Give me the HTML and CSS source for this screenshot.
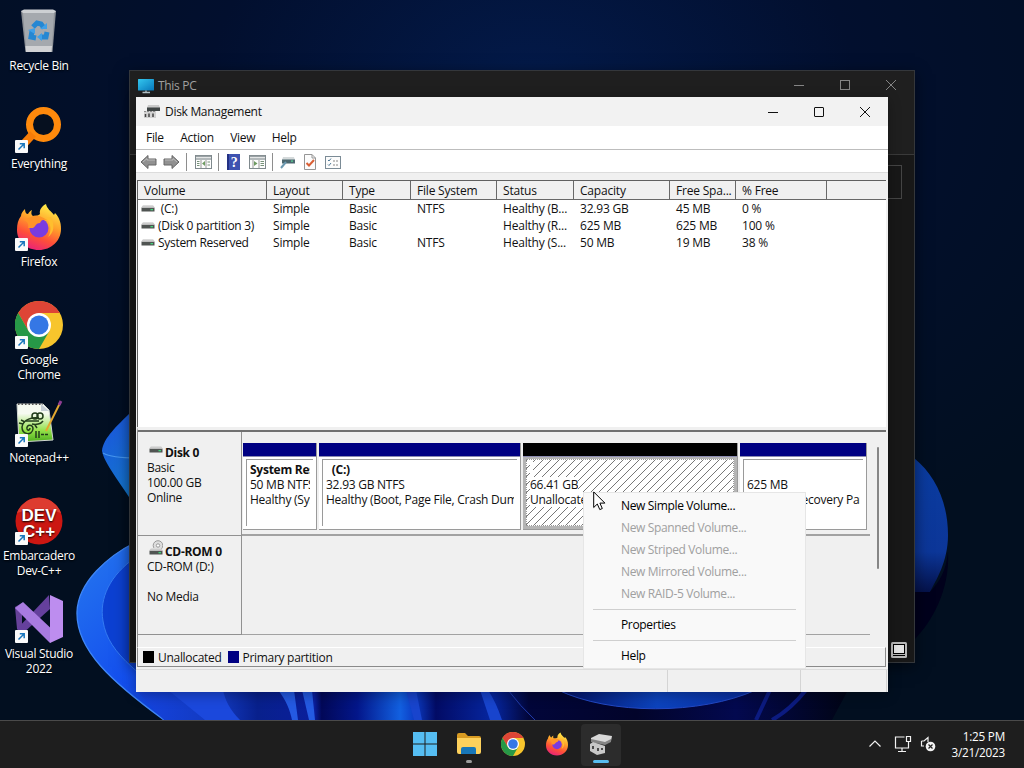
FILE: index.html
```
<!DOCTYPE html>
<html lang="en">
<head>
  <meta charset="UTF-8">
  <title>Disk Management</title>
  <link rel="stylesheet" href="styles.css">
</head>
<body>
  <!-- shared icons -->
  <svg class="defs" width="0" height="0">
    <defs>
      <linearGradient id="ffBody" x1="0.7" y1="0" x2="0.3" y2="1">
        <stop offset="0" stop-color="#fff04a"/><stop offset="0.4" stop-color="#ffa02a"/>
        <stop offset="0.7" stop-color="#ff5038"/><stop offset="1" stop-color="#e8207c"/>
      </linearGradient>
      <linearGradient id="driveTop" x1="0" y1="0" x2="0" y2="1">
        <stop offset="0" stop-color="#e4e4e4"/><stop offset="1" stop-color="#b5b5b5"/>
      </linearGradient>
      <linearGradient id="sky" x1="0" y1="0" x2="1" y2="1">
        <stop offset="0" stop-color="#33c6ee"/><stop offset="1" stop-color="#0879bd"/>
      </linearGradient>
      <symbol id="shortcut" viewBox="0 0 13 13">
        <rect width="13" height="13" rx="1" fill="#fafafa"/>
        <path d="M3.5 9.5 L8.7 4.3 M4.8 3.8 H9.2 V8.2" fill="none" stroke="#1976bd" stroke-width="1.5"/>
      </symbol>
      <symbol id="firefox" viewBox="0 0 48 48">
        <path d="M6 13 C6 10 8 8 10 6 C10 9 11 11 13 11 C14 9 15 8 17 7 C16 9 16 12 18 13 C22 13 24 12 25 11 C24 7 27 3 31 1 C32 6 36 8 39 12 L40 10 C44 14 46 19 46 26 C46 38 36 47 24 47 C11 47 2 38 2 27 C2 21 3 17 6 13 Z" fill="url(#ffBody)"/>
        <circle cx="24" cy="25" r="9.5" fill="#7a3be0"/>
        <path d="M18 13 C25 12 28 15 32 17 C28 16 26 17 25 20 C21 20 21 23 18 25 L13 25 C14 22 13 19 9 17 C12 15 15 15 18 13 Z" fill="#ff9428"/>
        <path d="M31 15 C36 20 37 28 33 34 C39 30 40 22 36 14 Z" fill="#ffbe2e"/>
      </symbol>
      <symbol id="chrome" viewBox="0 0 48 48">
        <circle cx="24" cy="24" r="24" fill="#f7c52c"/>
        <path d="M24 24 L24 12 H44.8 A24 24 0 0 0 3.2 12 L13.6 30 Z" fill="#de4536"/>
        <path d="M3.2 12 L13.6 30 L24 36 L34.4 30 L24 48 A24 24 0 0 1 3.2 12 Z" fill="#279847"/>
        <circle cx="24" cy="24" r="12" fill="#fff"/>
        <circle cx="24" cy="24" r="9.6" fill="#3577e5"/>
      </symbol>
      <symbol id="drive" viewBox="0 0 14 8">
        <path d="M2 0 H12 L14 3 H0 Z" fill="url(#driveTop)"/>
        <rect x="0.5" y="3" width="13" height="3.5" fill="#505452"/>
        <rect x="9.5" y="4" width="2.5" height="1.3" fill="#43d37b"/>
      </symbol>
    </defs>
  </svg>

  <div class="desktop">
    <svg class="wallpaper" width="1024" height="720" viewBox="0 0 1024 720">
      <defs>
        <radialGradient id="night" cx="0.52" cy="0.12" r="0.7">
          <stop offset="0" stop-color="#031a4a"/><stop offset="0.45" stop-color="#020f2e"/><stop offset="1" stop-color="#020f20"/>
        </radialGradient>
        <linearGradient id="petal" x1="0" y1="0" x2="1" y2="1">
          <stop offset="0" stop-color="#2678ee"/><stop offset="0.5" stop-color="#1450ee"/><stop offset="1" stop-color="#0a2ab4"/>
        </linearGradient>
        <linearGradient id="petalTop" x1="0" y1="0" x2="0.3" y2="1">
          <stop offset="0" stop-color="#1c54de"/><stop offset="1" stop-color="#1477cf"/>
        </linearGradient>
        <linearGradient id="petalRight" x1="0" y1="0" x2="0" y2="1">
          <stop offset="0" stop-color="#0a3ca0"/><stop offset="0.7" stop-color="#0c3698"/><stop offset="1" stop-color="#05124a"/>
        </linearGradient>
        <linearGradient id="folds" gradientUnits="userSpaceOnUse" x1="136" y1="0" x2="850" y2="0">
          <stop offset="0" stop-color="#1544e0"/><stop offset="0.12" stop-color="#1238bc"/><stop offset="0.17" stop-color="#08208c"/>
          <stop offset="0.25" stop-color="#0a1e9c"/><stop offset="0.26" stop-color="#020858"/><stop offset="0.31" stop-color="#03168a"/>
          <stop offset="0.37" stop-color="#1260e0"/><stop offset="0.39" stop-color="#0c3cc4"/><stop offset="0.42" stop-color="#020b65"/><stop offset="0.5" stop-color="#0626a0"/>
          <stop offset="0.55" stop-color="#02063a"/><stop offset="0.7" stop-color="#02042a"/><stop offset="0.84" stop-color="#03094f"/>
          <stop offset="1" stop-color="#010414"/>
        </linearGradient>
        <linearGradient id="bowl" x1="0" y1="0" x2="1" y2="0">
          <stop offset="0" stop-color="#031164"/><stop offset="0.5" stop-color="#0c43bd"/><stop offset="1" stop-color="#092c9e"/>
        </linearGradient>
      </defs>
      <rect width="1024" height="720" fill="url(#night)"/>
      <path d="M130 413 C118 425 103 438 102 451 C104 463 120 482 136 508 Z" fill="url(#petalTop)"/>
      <path d="M103 453 C110 457 120 458 136 458" fill="none" stroke="#4696ef" stroke-width="1.2"/>
      <path d="M914 458 C935 475 948 502 948 535 C948 562 936 580 930 592 L914 592 Z" fill="url(#petalRight)"/>
      <path d="M930 592 C941 580 946 570 948 552 C950 590 932 622 914 640 V592 Z" fill="#01011c"/>
      <path d="M136 542 C108 556 78 582 77 612 C76 650 112 682 164 720 H260 V542 Z" fill="url(#petal)"/>
      <path d="M136 542 C108 556 78 582 77 612 C76 650 112 682 164 720" fill="none" stroke="#3f86f5" stroke-width="1.3"/>
      <path d="M136 557 C110 575 99 598 103 621 C108 655 142 677 203 720 H240 V557 Z" fill="#0c40d2"/>
      <path d="M136 557 C110 575 99 598 103 621 C108 655 142 677 203 720" fill="none" stroke="#347bf2"/>
      <path d="M136 690 H848 L832 720 H164 Z" fill="url(#folds)"/>
      <path d="M168 690 L205 720 H240 C230 710 225 700 223 690 Z" fill="#1b48dc"/>
      <path d="M278 690 C286 700 290 710 292 720 H298 L294 690 Z M302 690 L309 720 H315 L312 690 Z" fill="#245ae2"/>
      <path d="M406 690 L414 720 H422 L416 690 Z M488 690 Q496 702 502 720 H490 L480 690 Z" fill="#1844cd"/>
      <path d="M508 690 Q520 706 535 720" fill="none" stroke="#213cac"/>
      <path d="M558 690 C610 715 700 715 756 690 Z" fill="url(#bowl)"/>
      <path d="M558 690 C610 715 700 715 756 690" fill="none" stroke="#2349c5"/>
      <path d="M770 690 L756 720 M806 690 Q790 710 772 720" fill="none" stroke="#0c1b80" stroke-width="4"/>
    </svg>

    <div class="shortcuts">
      <div class="shortcut">
        <svg width="48" height="48" viewBox="0 0 48 48">
          <path d="M6 4 L41 4 L37.500 45 H10.500 Z" fill="#8c9096"/>
          <path d="M6 4 L9 2.500 H38 L41 4 L39 6 H8 Z" fill="#cdd0d3"/>
          <path d="M8 6 H39 L37 40 H11 Z" fill="#a5a9ae"/>
          <path d="M10.500 39 H37 L36.500 45 H11 Z" fill="#d1d2d4"/>
          <g fill="none" stroke="#2587d2" stroke-width="5">
            <path d="M18 20 L22 16 L26 17 L29 21"/><path d="M32 25 L31 30 L25 30"/><path d="M21 31 L16 30 L17 24"/>
          </g>
          <path d="M25 22 H32 V16 Z M27 26 V34 L22 30 Z M13 23 L20 21 L20 27 Z" fill="#3fa0e8"/>
        </svg>
        <span>Recycle Bin</span>
      </div>
      <div class="shortcut">
        <svg width="48" height="48" viewBox="0 0 48 48">
          <circle cx="28.500" cy="19.500" r="14" fill="#06101f" stroke="#ff8a0c" stroke-width="7"/>
          <path d="M18 29 L6 42" stroke="#f77c08" stroke-width="8"/>
          <use href="#shortcut" y="35" width="13" height="13"/>
        </svg>
        <span>Everything</span>
      </div>
      <div class="shortcut">
        <svg width="48" height="48" viewBox="0 0 48 48">
          <use href="#firefox" width="48" height="48"/>
          <use href="#shortcut" y="35" width="13" height="13"/>
        </svg>
        <span>Firefox</span>
      </div>
      <div class="shortcut">
        <svg width="48" height="48" viewBox="0 0 48 48">
          <use href="#chrome" width="48" height="48"/>
          <use href="#shortcut" y="35" width="13" height="13"/>
        </svg>
        <span>Google<br>Chrome</span>
      </div>
      <div class="shortcut">
        <svg width="48" height="48" viewBox="0 0 48 48">
          <defs><linearGradient id="npp" x1="0" y1="0" x2="0" y2="1"><stop offset="0.25" stop-color="#f6faf1"/><stop offset="0.7" stop-color="#94e24a"/><stop offset="1" stop-color="#4cae1c"/></linearGradient></defs>
          <path d="M2 5 H28 L34 11 L38 41 L4 43 Z" fill="url(#npp)" stroke="#d0d5d0"/>
          <path d="M3 5 H28" stroke="#555" stroke-width="2" stroke-dasharray="1.500 2"/>
          <path d="M26 5 V12 H34 Z" fill="#c5cdd4"/>
          <g fill="none" stroke="#223c1b" stroke-width="1.500">
            <path d="M24 19 C18 18 8 20 7 28 C7 36 17 37 18 30 C18 25 11 25 12 30 C13 32 15 31 15 29"/>
            <path d="M17 25 C21 26 26 25 28 22 M4 24 L8 25 M6 21 L10 23 M20 26 L22 29 M11 22 L24 22"/>
            <circle cx="20" cy="17" r="3"/><circle cx="25" cy="17" r="3"/>
            <path d="M21 32 V39 M24 32 V39 M26 35.500 H29 M30 35.500 H33"/>
          </g>
          <path d="M31 32 L45 4" stroke="#e4a830" stroke-width="2"/>
          <path d="M44 6 L46 2" stroke="#8e3d93" stroke-width="3"/>
          <use href="#shortcut" y="35" width="13" height="13"/>
        </svg>
        <span>Notepad++</span>
      </div>
      <div class="shortcut">
        <svg width="48" height="48" viewBox="0 0 48 48">
          <circle cx="24" cy="24" r="23.500" fill="#cc1712"/>
          <path d="M2 16 A23.500 23.500 0 0 1 46 16 Q24 8 2 16Z" fill="#dd3c30"/>
          <text class="dev-logo" x="24" y="23.500" text-anchor="middle">DEV</text>
          <text class="dev-logo" x="24" y="39.500" text-anchor="middle">C++</text>
          <use href="#shortcut" y="35" width="13" height="13"/>
        </svg>
        <span>Embarcadero<br>Dev-C++</span>
      </div>
      <div class="shortcut">
        <svg width="48" height="48" viewBox="0 0 48 48">
          <path d="M0 12 L7 8 L7 36 L2 34 Z" fill="#67429a"/>
          <path d="M2 34 L34 0 L35 14 L7 39 Z" fill="#65409d"/>
          <path d="M0 13 L8 7 L42 39 L35 48 Z" fill="#a87be0"/>
          <path d="M35 0 L48 6 V42 L35 48 Z" fill="#bd8def"/>
          <use href="#shortcut" y="35" width="13" height="13"/>
        </svg>
        <span>Visual Studio<br>2022</span>
      </div>
    </div>

    <!-- explorer window in the back -->
    <div class="window explorer">
      <div class="explorer-title">
        <svg width="18" height="16" viewBox="0 0 18 16">
          <rect y="1" width="16" height="11.500" rx="0.500" fill="url(#sky)"/>
          <path d="M8 12.500 V14.500 M4.500 14.500 H12" stroke="#b5c5ca" stroke-width="1.300"/>
        </svg>
        <span>This PC</span>
        <div class="controls">
          <svg width="12" height="12"><path d="M1 6.500 H11"/></svg>
          <svg width="12" height="12"><rect x="1.500" y="1.500" width="9" height="9"/></svg>
          <svg width="12" height="12"><path d="M1 1 L11 11 M11 1 L1 11"/></svg>
        </div>
      </div>
      <div class="explorer-body">
        <div class="search-box"></div>
        <svg class="view-toggle" width="16" height="16" viewBox="0 0 16 16">
          <rect width="16" height="16" rx="1.500" fill="#b8b8b8"/>
          <rect x="2.500" y="2.500" width="11" height="9" fill="#e4e4e4" stroke="#000"/>
          <path d="M2 13.500 H14" stroke="#000"/>
        </svg>
      </div>
    </div>

    <div class="window disk-mgmt">
      <div class="titlebar">
        <svg width="16" height="14" viewBox="0 0 16 14">
          <path d="M4 0 H15 L16 3 H3 Z" fill="#c9c9c9"/>
          <rect x="3" y="2.500" width="13" height="3.500" fill="#3f4545"/>
          <path d="M0 6 H12 V13 H0 Z" fill="#d2d2d2"/>
          <path d="M1.500 9 V12 M5 8.500 V12 M9 8.500 V12" stroke="#444" stroke-width="1.500"/>
          <path d="M0 6.500 H12" stroke="#8e8e8e" stroke-dasharray="2 1"/>
        </svg>
        <span>Disk Management</span>
        <div class="controls">
          <svg width="12" height="12"><path d="M1 6.500 H11"/></svg>
          <svg width="12" height="12"><rect x="1.500" y="1.500" width="9" height="9" rx="0.500"/></svg>
          <svg width="12" height="12"><path d="M1 1 L11 11 M11 1 L1 11"/></svg>
        </div>
      </div>
      <div class="menubar">
        <span>File</span><span>Action</span><span>View</span><span>Help</span>
      </div>
      <div class="toolbar">
        <svg width="17" height="16" viewBox="0 0 17 16"><path d="M1 8 L8 1.500 V5 H16 V11 H8 V14.500 Z" fill="#919191" stroke="#666"/><path d="M3 8 L7 4.500 V6 H15" stroke="#bcbcbc" fill="none"/></svg>
        <svg class="forward" width="17" height="16" viewBox="0 0 17 16"><path d="M16 8 L9 1.500 V5 H1 V11 H9 V14.500 Z" fill="#919191" stroke="#666"/><path d="M14 8 L10 4.500 V6 H2" stroke="#bcbcbc" fill="none"/></svg>
        <i class="divider"></i>
        <svg class="tree" width="17" height="14" viewBox="0 0 17 14"><rect x="0.500" y="0.500" width="16" height="13" fill="#fdfdfd" stroke="#7f898d"/><path d="M1 1.500 H16 M1 4 H16" stroke="#9aa2a5" stroke-width="1.500"/><path d="M6 5 V13 M11 5 V13" stroke="#999"/><path d="M2 6.500 H4.500 M2 8.500 H4.500 M2 10.500 H4.500 M12.500 7 H15 M12.500 10 H15" stroke="#769279"/><path d="M10 6 V11 L7 8.500 Z" fill="#6e9b61"/></svg>
        <i class="divider"></i>
        <svg class="help" width="13" height="16" viewBox="0 0 13 16"><rect width="13" height="16" fill="#3e52b0"/><path d="M1 0 V16" stroke="#233184" stroke-width="2"/><text x="7" y="13" text-anchor="middle">?</text></svg>
        <svg class="panel" width="17" height="14" viewBox="0 0 17 14"><rect x="0.500" y="0.500" width="16" height="13" fill="#fdfdfd" stroke="#7f898d"/><path d="M1 1.500 H16 M1 4 H16" stroke="#9aa2a5" stroke-width="1.500"/><path d="M4 5 V13 M10 5 V13" stroke="#999"/><path d="M11.500 6.500 H15 M11.500 8.500 H15 M11.500 10.500 H15" stroke="#769279"/><path d="M5 6 V11 L8.500 8.500 Z" fill="#6e9b61"/></svg>
        <i class="divider"></i>
        <svg class="rescan" width="16" height="14" viewBox="0 0 16 14"><path d="M3 2 H14 L15 5 H2 Z" fill="#d5dadb"/><rect x="2" y="4.500" width="13" height="4" fill="#4d6870"/><rect x="11" y="5.500" width="2" height="1.200" fill="#5bd795"/><path d="M6 7 L1 13" stroke="#6c99b0" stroke-width="2"/></svg>
        <svg class="check" width="12" height="16" viewBox="0 0 12 16"><path d="M0.500 0.500 H8 L11.500 4 V15.500 H0.500 Z" fill="#fcfcfc" stroke="#969696"/><path d="M8 0.500 V4 H11.500" fill="none" stroke="#969696"/><path d="M2.500 9 L5 11.500 L10 6" fill="none" stroke="#d95f35" stroke-width="2"/></svg>
        <svg class="list" width="16" height="13" viewBox="0 0 16 13"><rect x="0.500" y="0.500" width="15" height="12" fill="#fcfcfc" stroke="#7b8b96"/><path d="M3 4 L4 5 L6 2.500 M3 8.500 L4 9.500 L6 7" fill="none" stroke="#4d7896"/><path d="M8 5 H10 M11 5 H13 M8 9 H10 M11 9 H13" stroke="#888"/></svg>
      </div>

      <div class="volume-list">
        <div class="volume-row volume-head">
          <span>Volume</span><span>Layout</span><span>Type</span><span>File System</span><span>Status</span><span>Capacity</span><span>Free Spa...</span><span>% Free</span><span></span>
        </div>
        <div class="volume-row">
          <span><svg width="14" height="8"><use href="#drive"/></svg>&nbsp;(C:)</span><span>Simple</span><span>Basic</span><span>NTFS</span><span>Healthy (B...</span><span>32.93 GB</span><span>45 MB</span><span>0 %</span>
        </div>
        <div class="volume-row">
          <span><svg width="14" height="8"><use href="#drive"/></svg>(Disk 0 partition 3)</span><span>Simple</span><span>Basic</span><span></span><span>Healthy (R...</span><span>625 MB</span><span>625 MB</span><span>100 %</span>
        </div>
        <div class="volume-row">
          <span><svg width="14" height="8"><use href="#drive"/></svg>System Reserved</span><span>Simple</span><span>Basic</span><span>NTFS</span><span>Healthy (S...</span><span>50 MB</span><span>19 MB</span><span>38 %</span>
        </div>
      </div>

      <div class="graph">
        <div class="disks">
          <div class="disk">
            <div class="disk-label">
              <b><svg width="14" height="14" viewBox="0 0 14 14"><use href="#drive" y="1" width="14" height="8"/></svg>Disk 0</b>
              <span>Basic</span><span>100.00 GB</span><span>Online</span>
            </div>
            <div class="partitions">
              <div class="partition reserved"><div class="stripe"></div><div class="info"><b>System Reserved</b><span>50 MB NTFS</span><span>Healthy (System)</span></div></div>
              <div class="partition system"><div class="stripe"></div><div class="info"><b>&nbsp;&nbsp;(C:)</b><span>32.93 GB NTFS</span><span>Healthy (Boot, Page File, Crash Dump)</span></div></div>
              <div class="partition unallocated"><div class="stripe"></div><div class="info"><b>&nbsp;</b><span>66.41 GB</span><span>Unallocated</span></div></div>
              <div class="partition recovery"><div class="stripe"></div><div class="info"><b>&nbsp;</b><span>625 MB</span><span>Healthy (Recovery Partition)</span></div></div>
            </div>
          </div>
          <div class="disk cdrom">
            <div class="disk-label">
              <b><svg width="14" height="16" viewBox="0 0 14 16"><circle cx="9" cy="5.500" r="4.800" fill="#dedede" stroke="#999"/><circle cx="9" cy="5.500" r="1.700" fill="#fff" stroke="#999"/><use href="#drive" y="8" width="14" height="8"/></svg>CD-ROM 0</b>
              <span>CD-ROM (D:)</span><span>&nbsp;</span><span>No Media</span>
            </div>
            <div class="partitions"></div>
          </div>
        </div>
        <div class="scrollbar"><div class="thumb"></div></div>
      </div>
      <div class="legend">
        <i class="swatch black"></i><span>Unallocated</span><i class="swatch navy"></i><span>Primary partition</span>
      </div>
      <div class="statusbar"><span></span><span></span><span></span></div>
    </div>

    <div class="context-menu">
      <div class="item">New Simple Volume...</div>
      <div class="item disabled">New Spanned Volume...</div>
      <div class="item disabled">New Striped Volume...</div>
      <div class="item disabled">New Mirrored Volume...</div>
      <div class="item disabled">New RAID-5 Volume...</div>
      <hr>
      <div class="item">Properties</div>
      <hr>
      <div class="item">Help</div>
    </div>
    <svg class="cursor" width="13" height="20" viewBox="0 0 13 20"><path d="M0.700 0.900 V16.500 L4.300 13 L6.800 18.600 L9.300 17.500 L6.900 12.100 H11.900 Z" fill="#fff" stroke="#000"/></svg>
  </div>

  <div class="taskbar">
    <div class="apps">
      <div class="app"><svg width="24" height="24"><path d="M0 0 H11.500 V11.500 H0 Z M12.500 0 H24 V11.500 H12.500 Z M0 12.500 H11.500 V24 H0 Z M12.500 12.500 H24 V24 H12.500 Z" fill="#55bdf2"/></svg></div>
      <div class="app running"><svg width="26" height="24"><path d="M1 3 Q1 1 3 1 H9 L12 4 H23 Q25 4 25 6 V12 H1 Z" fill="#d89b22"/><path d="M1 6 H25 V20 Q25 22 23 22 H3 Q1 22 1 20 Z" fill="#fdd15c"/><path d="M5 22 V17 Q5 15 7 15 H18 Q20 15 20 17 V22 Z" fill="#1877b8"/></svg></div>
      <div class="app"><svg width="24" height="24"><use href="#chrome"/></svg></div>
      <div class="app"><svg width="24" height="24"><use href="#firefox"/></svg></div>
      <div class="app active"><svg width="24" height="24" viewBox="0 0 24 24"><path d="M2 6 L10 2 L23 4 L22 9 L16 12 L2 8 Z" fill="#d8d8d8"/><path d="M2 7 L16 10 L22 7 V10 L16 13 L2 10 Z" fill="#858585"/><path d="M1 12 L4 10 L16 14 V21 L8 23 L1 19 Z" fill="#c8c8c8"/><path d="M4 14 V17 M9 16 V19 M13 16 V18" stroke="#4a4a4a" stroke-width="2"/></svg></div>
    </div>
    <div class="tray">
      <svg width="14" height="10"><path d="M1.500 7.500 L7 2 L12.500 7.500"/></svg>
      <svg class="net" width="18" height="18"><path d="M10.500 2 H1.500 V13 H14.500 V9 M8 13 V16 M4 16.500 H12 M12.500 1.500 H16.500 V6.500 H12.500 Z M14.500 7 V13"/></svg>
      <svg class="sound" width="16" height="16"><path d="M1.500 5 H4 L8 1.500 V6 M1.500 5 V10 H4"/><circle cx="10.500" cy="10.500" r="4.800" fill="#f2f2f2" stroke="none"/><path class="mute" d="M8.500 8.500 L12.500 12.500 M12.500 8.500 L8.500 12.500"/></svg>
      <div class="clock"><span>1:25 PM</span><span>3/21/2023</span></div>
    </div>
  </div>
</body>
</html>
```
FILE: styles.css
```
* {
  box-sizing: border-box;
}
body {
  margin: 0;
  width: 1024px;
  height: 768px;
  overflow: hidden;
  font-family: "Open Sans", "Noto Sans", sans-serif;
  font-size: 12px;
  letter-spacing: -0.3px;
  color: #111;
  background: #020f20;
}
svg {
  display: block;
  flex-shrink: 0;
}
.defs {
  position: absolute;
}
.desktop {
  position: relative;
  height: 720px;
  overflow: hidden;
}
.wallpaper {
  position: absolute;
  top: 0;
  left: 0;
}

/* desktop icons */
.shortcuts {
  position: relative;
  width: 78px;
  padding-top: 7px;
}
.shortcut {
  height: 98px;
  display: flex;
  flex-direction: column;
  align-items: center;
  gap: 3px;
  text-align: center;
  line-height: 15px;
  color: #fff;
  text-shadow: 0 1px 2px #000;
}
.shortcut span {
  white-space: nowrap;
}
.dev-logo {
  font: bold 17px "Liberation Sans", sans-serif;
  letter-spacing: 0;
  fill: #fff;
}

/* windows */
.window {
  position: absolute;
}
.controls {
  display: flex;
  gap: 34px;
  margin-left: auto;
  fill: none;
  stroke: #111;
}
.explorer {
  left: 129px;
  top: 70px;
  width: 786px;
  height: 593px;
  background: #181818;
  border: 1px solid #34373b;
  box-shadow: 0 4px 14px rgba(0, 0, 0, 0.5);
}
.explorer-title {
  height: 84px;
  display: flex;
  align-items: flex-start;
  gap: 2px;
  padding: 7px 17px 0 8px;
  background: #1f1f1f;
  border-bottom: 1px solid #3a3a3a;
  color: #a0a0a0;
  line-height: 15px;
}
.explorer .controls {
  padding-top: 1px;
  stroke: #858585;
}
.explorer-body {
  height: 507px;
  display: flex;
  flex-direction: column;
  justify-content: space-between;
  align-items: flex-end;
  padding: 10px 7px 4px;
}
.search-box {
  width: 300px;
  height: 34px;
  margin-right: 5px;
  border: 1px solid #454545;
}

.disk-mgmt {
  left: 136px;
  top: 97px;
  width: 752px;
  height: 595px;
  display: flex;
  flex-direction: column;
  background: #f0f0f0;
  box-shadow: 0 3px 12px rgba(0, 0, 0, 0.3);
}
.titlebar {
  flex: 0 0 29px;
  display: flex;
  align-items: center;
  gap: 5px;
  padding: 0 17px 0 8px;
  background: #f2f2f2;
}
.menubar {
  flex: 0 0 24px;
  display: flex;
  gap: 16.5px;
  padding: 0 10px;
  line-height: 23px;
  background: #fff;
  border-bottom: 1px solid #bdbdbd;
}
.toolbar {
  flex: 0 0 23px;
  display: flex;
  align-items: center;
  padding: 2px 0 0 4px;
  background: #fff;
  border-bottom: 1px solid #dcdcdc;
}
.divider {
  width: 1px;
  height: 18px;
  background: #8e8e8e;
}
.toolbar .forward { margin: 0 6px; }
.toolbar .tree { margin: 0 6px 0 8px; }
.toolbar .help { margin: 0 9px 0 8px; }
.toolbar .panel { margin-right: 6px; }
.toolbar .rescan { margin: 0 8px 0 7px; }
.toolbar .list { margin-left: 9px; }
.toolbar text {
  font: bold 14px "Liberation Serif", serif;
  fill: #fff;
}

.volume-list {
  flex: 0 0 247px;
  margin: 7px 2px 0 1px;
  background: #fff;
  border-top: 1px solid #606060;
  border-left: 1px solid #606060;
}
.volume-row {
  display: grid;
  grid-template-columns: 129px 76px 68px 86px 77px 96px 66px 91px 1fr;
  height: 17px;
  line-height: 17px;
}
.volume-row span {
  padding-left: 6px;
  letter-spacing: -0.2px;
  white-space: nowrap;
  overflow: hidden;
}
.volume-row span:first-child {
  display: flex;
  align-items: center;
  gap: 3px;
  padding-left: 3px;
  letter-spacing: -0.3px;
}
.volume-head {
  height: 19px;
  line-height: 19px;
  background: #f0f0f0;
  border-bottom: 1px solid #686868;
}
.volume-head span {
  border-right: 1px solid #686868;
}
.volume-head span:first-child {
  padding-left: 6px;
  letter-spacing: -0.2px;
}
.volume-head span:last-child {
  border-right: 0;
}

/* disk graph */
.graph {
  flex: 0 0 220px;
  display: flex;
  margin: 0 2px 0 1px;
  border-top: 4px solid #f0f0f0;
  border-left: 1px solid #8e8e8e;
}
.graph::before {
  content: "";
  position: absolute;
  left: 2px;
  top: 333px;
  width: 748px;
  height: 2px;
  background: #707070;
}
.disks {
  width: 732px;
}
.disk {
  display: flex;
  height: 105px;
}
.cdrom {
  height: 99px;
}
.disk-label {
  width: 104px;
  display: flex;
  flex-direction: column;
  padding: 13px 8px 0 9px;
  line-height: 15px;
  border-right: 1px solid #919191;
  border-bottom: 1px solid #919191;
}
.disk-label b {
  display: flex;
  align-items: center;
  gap: 2px;
  height: 16px;
  padding-left: 2px;
  white-space: nowrap;
}
.cdrom .disk-label {
  padding-top: 7px;
}
.cdrom .disk-label svg {
  margin-bottom: 6px;
}
.partitions {
  flex: 1;
  display: flex;
  gap: 2px;
  padding: 12px 3px 4px 1px;
  border-bottom: 2px solid #a2a2a2;
}
.cdrom .partitions {
  border-bottom: 1px solid #a2a2a2;
}
.partition {
  display: flex;
  flex-direction: column;
  border-right: 1px solid #9a9a9a;
  border-bottom: 1px solid #9a9a9a;
}
.reserved { width: 74px; }
.system { width: 202px; }
.unallocated { width: 215px; }
.recovery { width: 127px; }
.stripe {
  height: 14px;
  background: #000082;
  border-bottom: 1px solid #8b8bb0;
}
.info {
  flex: 1;
  display: flex;
  flex-direction: column;
  margin: 2px 3px 3px;
  padding: 2px 3px 0;
  line-height: 15px;
  letter-spacing: -0.25px;
  white-space: nowrap;
  overflow: hidden;
  background: #fff;
  border-left: 1px solid #9a9a9a;
  border-top: 1px solid #9a9a9a;
}
.reserved, .system, .recovery {
  background: #fff;
}
.info b, .info span {
  overflow: hidden;
  flex-shrink: 0;
}
.unallocated {
  background: #b4b4b4;
}
.unallocated .stripe {
  background: #000;
}
.unallocated .info {
  border: 1px dotted #999;
  align-items: flex-start;
  background: linear-gradient(135deg, #fff 46%, #777 46% 54%, #fff 54%) 0 0 / 8px 8px;
}
.unallocated .info span,
.unallocated .info b {
  background: #fff;
}
.scrollbar {
  padding: 16px 0 0 7px;
}
.thumb {
  width: 2px;
  height: 122px;
  border-radius: 1px;
  background: #868686;
}
.legend {
  flex: 0 0 20px;
  display: flex;
  align-items: center;
  margin: 0 2px 0 1px;
  padding-left: 5px;
  border: 1px solid #8a8a8a;
  border-top-color: #fff;
}
.swatch {
  width: 11px;
  height: 12px;
  margin-right: 4px;
}
.black { background: #000; }
.navy {
  background: #000082;
  margin-left: 6px;
}
.statusbar {
  flex: 1;
  display: flex;
  margin-top: 2px;
  padding-right: 1px;
  border-top: 1px solid #dcdcdc;
}
.statusbar span {
  width: 133px;
  border-right: 1px solid #d4d4d4;
}
.statusbar span:first-child {
  flex: 1;
}
.statusbar span:last-child {
  width: 86px;
}

.context-menu {
  position: absolute;
  left: 583px;
  top: 492px;
  width: 223px;
  height: 177px;
  padding: 2px 9px 0;
  background: #f9f9f9;
  border: 1px solid #e6e6e6;
}
.item {
  height: 22px;
  padding-left: 28px;
  line-height: 22px;
  letter-spacing: -0.35px;
  color: #000;
}
.disabled {
  color: #a0a0a0;
}
.context-menu hr {
  margin: 4px 0;
  border: 0;
  border-top: 1px solid #cfcfcf;
}
.cursor {
  position: absolute;
  left: 593px;
  top: 491px;
}

/* taskbar */
.taskbar {
  position: relative;
  height: 48px;
  display: flex;
  justify-content: flex-end;
  background: #1e1e1e;
  border-top: 1px solid #4a4a4a;
}
.apps {
  flex: 1;
  display: flex;
  gap: 4px;
  padding: 3px 0 0 405px;
}
.app {
  width: 40px;
  height: 42px;
  display: flex;
  flex-direction: column;
  align-items: center;
  padding-top: 8px;
  border-radius: 4px;
}
.app.active {
  background: #2c2c2c;
}
.app.active::after {
  content: "";
  width: 16px;
  height: 3px;
  margin-top: 4px;
  border-radius: 2px;
  background: #58bdf0;
}
.app.running::after {
  content: "";
  width: 6px;
  height: 3px;
  margin-top: 4px;
  border-radius: 2px;
  background: #9d9d9d;
}
.tray {
  display: flex;
  align-items: center;
  padding: 0 19px 2px 0;
  color: #fff;
  fill: none;
  stroke: #f2f2f2;
  stroke-width: 1.2;
}
.net { margin: 0 8px 0 12px; }
.mute { stroke: #222; }
.clock {
  width: 69px;
  display: flex;
  flex-direction: column;
  text-align: right;
  font-size: 11.7px;
  line-height: 16px;
  letter-spacing: -0.2px;
}
```
